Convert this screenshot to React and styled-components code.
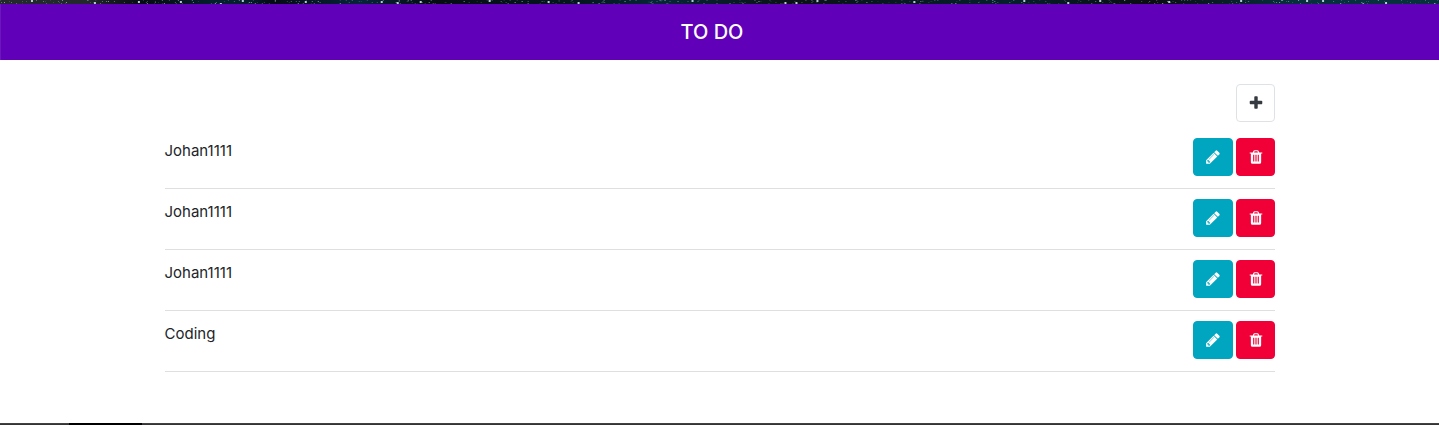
import React from "react";
import styled, { createGlobalStyle } from "styled-components";

const GlobalStyle = createGlobalStyle`
  *, *::before, *::after { box-sizing: border-box; }
  body {
    margin: 0;
    background: #fff;
    color: #212529;
    font-family: Inter, "Liberation Sans", sans-serif;
    font-size: 15px;
    line-height: 26px;
  }
`;

const Page = styled.div`
  display: flex;
  flex-direction: column;
  min-height: 100vh;
`;

const Sky = styled.svg`
  display: block;
  flex: none;
  width: 100%;
  height: 4px;
`;

const Header = styled.header`
  display: flex;
  justify-content: center;
  padding: 13px 16px 13px 0;
  background: #6000b8;
  border-left: 1px solid #6c16bb;
`;

const Title = styled.h1`
  margin: 0;
  color: #fff;
  font-size: 20px;
  font-weight: 500;
  line-height: 30px;
`;

const Main = styled.main`
  flex: 1;
  width: 100%;
  max-width: 1140px;
  margin: 0 auto;
  padding: 24px 15px;
`;

const Toolbar = styled.div`
  display: flex;
  justify-content: flex-end;
  margin-bottom: 6px;
`;

const List = styled.ul`
  margin: 0;
  padding: 0;
  list-style: none;
`;

const Item = styled.li`
  display: flex;
  justify-content: space-between;
  align-items: flex-start;
  padding: 10px 0 12px;
  border-bottom: 1px solid #dfdfdf;
`;

const Actions = styled.div`
  display: flex;
  gap: 3px;
`;

const tones = {
  plain: { bg: "#fff", fg: "#343a40", line: "#dee2e6", width: 39 },
  edit: { bg: "#00a5c0", fg: "#fff", line: "#00a5c0", width: 40 },
  remove: { bg: "#f00037", fg: "#fff", line: "#f00037", width: 39 },
};

const IconButton = styled.button`
  display: flex;
  align-items: center;
  width: ${({ $tone }) => tones[$tone].width}px;
  height: 38px;
  padding: 0 0 0 11px;
  color: ${({ $tone }) => tones[$tone].fg};
  background: ${({ $tone }) => tones[$tone].bg};
  border: 1px solid ${({ $tone }) => tones[$tone].line};
  border-radius: 4px;
  cursor: pointer;
`;

const Glyph = styled.svg`
  flex: none;
  width: 16px;
  height: 16px;
  fill: currentColor;
`;

const Footer = styled.footer`
  display: flex;
  height: 2px;
  padding-left: 69px;
  background: linear-gradient(#4a4a4a, #2e2c2e);
`;

const FooterMark = styled.span`
  width: 73px;
  background: #000;
`;

const paths = {
  plus: "M1600 736v192q0 40-28 68t-68 28h-416v416q0 40-28 68t-68 28h-192q-40 0-68-28t-28-68v-416h-416q-40 0-68-28t-28-68v-192q0-40 28-68t68-28h416v-416q0-40 28-68t68-28h192q40 0 68 28t28 68v416h416q40 0 68 28t28 68z",
  pencil: "M491 1536l91-91-235-235-91 91v107h128v128h107zm523-928q0-22-22-22-10 0-17 7l-542 542q-7 7-7 17 0 22 22 22 10 0 17-7l542-542q7-7 7-17zm-54-192l416 416-832 832h-416v-416zm683 96q0 53-37 90l-166 166-416-416 166-165q36-38 90-38 53 0 91 38l235 234q37 39 37 91z",
  trash: "M704 1376v-704q0-14-9-23t-23-9h-64q-14 0-23 9t-9 23v704q0 14 9 23t23 9h64q14 0 23-9t9-23zm256 0v-704q0-14-9-23t-23-9h-64q-14 0-23 9t-9 23v704q0 14 9 23t23 9h64q14 0 23-9t9-23zm256 0v-704q0-14-9-23t-23-9h-64q-14 0-23 9t-9 23v704q0 14 9 23t23 9h64q14 0 23-9t9-23zm-544-992h448l-48-117q-7-9-17-11h-317q-10 2-17 11zm928 32v64q0 14-9 23t-23 9h-96v948q0 83-47 143.500t-113 60.500h-832q-66 0-113-58.500t-47-141.500v-952h-96q-14 0-23-9t-9-23v-64q0-14 9-23t23-9h309l70-167q15-37 54-63t79-26h320q40 0 79 26t54 63l70 167h309q14 0 23 9t9 23z",
};

function Icon({ name }) {
  return (
    <Glyph viewBox="0 0 1792 1792" aria-hidden="true">
      <path d={paths[name]} />
    </Glyph>
  );
}

const starColors = ["#8fb0b8", "#3f6470", "#2a5560", "#5c7f8a", "#3a5c68"];
const faintStars = Array.from({ length: 380 }, (_, i) => ({
  x: (i * 197 + ((i * i * 31) % 89)) % 1440,
  y: (i * 7 + ((i * i) % 5)) % 4,
  fill: starColors[(i * i + i * 3) % 5],
  opacity: 0.25 + ((i * 13) % 7) / 10,
}));

const brightStars = [
  [31, 0], [94, 2], [138, 1], [180, 1], [220, 3], [242, 0], [305, 1], [381, 1],
  [397, 2], [420, 1], [489, 0], [548, 1], [578, 2], [692, 0], [785, 2], [796, 2],
  [817, 0], [914, 1], [1024, 0], [1068, 2], [1100, 0], [1169, 1], [1241, 0],
  [1307, 0], [1323, 0], [1386, 2],
];

function Starfield() {
  return (
    <Sky viewBox="0 0 1440 4" preserveAspectRatio="none" aria-hidden="true">
      <defs>
        <linearGradient id="night">
          <stop offset="0" stopColor="#242a2c" />
          <stop offset="0.06" stopColor="#22282c" />
          <stop offset="0.1" stopColor="#050a12" />
          <stop offset="0.15" stopColor="#04202f" />
          <stop offset="0.17" stopColor="#04202f" />
          <stop offset="0.19" stopColor="#040a14" />
          <stop offset="0.25" stopColor="#06243a" />
          <stop offset="0.3" stopColor="#050c12" />
          <stop offset="0.4" stopColor="#04161f" />
          <stop offset="0.46" stopColor="#062638" />
          <stop offset="0.55" stopColor="#0a1116" />
          <stop offset="0.7" stopColor="#04202c" />
          <stop offset="0.8" stopColor="#0a0c12" />
          <stop offset="0.9" stopColor="#06303d" />
          <stop offset="1" stopColor="#06313d" />
        </linearGradient>
      </defs>
      <rect width="1440" height="4" fill="url(#night)" />
      {faintStars.map((s, i) => (
        <rect key={i} x={s.x} y={s.y} width="1" height="1" fill={s.fill} opacity={s.opacity} />
      ))}
      {brightStars.map(([x, y]) => (
        <rect key={x} x={x} y={y} width="2" height="2" fill="#b4cdd2" />
      ))}
    </Sky>
  );
}

const todos = ["Johan1111", "Johan1111", "Johan1111", "Coding"];

export default function App() {
  return (
    <>
      <GlobalStyle />
      <Page>
        <Starfield />
        <Header>
          <Title>TO DO</Title>
        </Header>
        <Main>
          <Toolbar>
            <IconButton $tone="plain" type="button" aria-label="Add task">
              <Icon name="plus" />
            </IconButton>
          </Toolbar>
          <List>
            {todos.map((todo, i) => (
              <Item key={i}>
                <span>{todo}</span>
                <Actions>
                  <IconButton $tone="edit" type="button" aria-label={`Edit ${todo}`}>
                    <Icon name="pencil" />
                  </IconButton>
                  <IconButton $tone="remove" type="button" aria-label={`Delete ${todo}`}>
                    <Icon name="trash" />
                  </IconButton>
                </Actions>
              </Item>
            ))}
          </List>
        </Main>
        <Footer>
          <FooterMark />
        </Footer>
      </Page>
    </>
  );
}
